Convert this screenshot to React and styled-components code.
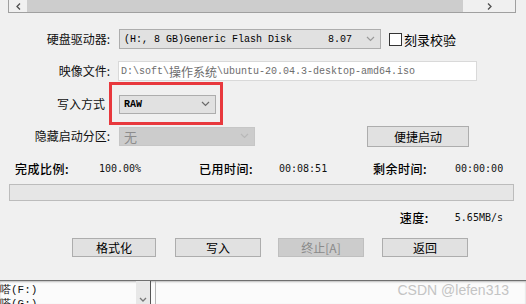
import React from "react";
import styled, { createGlobalStyle } from "styled-components";

const GlobalStyle = createGlobalStyle`
  html, body {
    margin: 0;
    padding: 0;
    background: #f0f0f0;
  }
  body {
    width: 526px;
    height: 304px;
    overflow: hidden;
    font-family: "Noto Sans CJK SC", "Noto Sans", sans-serif;
    font-size: 12px;
    color: #000;
  }
`

const Window = styled.div`
  width: 526px;
  height: 304px;
  display: flex;
  flex-direction: column;
  position: relative;
`

const ScrollStrip = styled.div`
  margin: 0 10px 0 8px;
  height: 12px;
  border: 1px solid #a0a0a0;
  border-top: none;
  display: flex;
  align-items: stretch;
  background: #f0f0f0;
`

const Arrow = styled.div`
  width: ${p => p.w}px;
  display: flex;
  align-items: center;
  justify-content: center;
  color: #606060;
`

const Thumb = styled.div`
  flex: 1;
  background: #cdcdcd;
`

const Form = styled.div`
  display: flex;
  flex-direction: column;
  gap: 12px;
  margin-top: 16px;
`

const Row = styled.div`
  display: flex;
  align-items: center;
  height: 20px;
  margin-top: ${p => p.mt || 0}px;
`

const Label = styled.div`
  width: ${p => p.w || 110}px;
  padding-left: ${p => p.pl || 0}px;
  box-sizing: border-box;
  text-align: ${p => p.left ? "left" : "right"};
  margin-right: ${p => p.mr || 9}px;
  white-space: nowrap;
  line-height: 20px;
  color: #111;
`

const Combo = styled.div`
  position: relative;
  width: ${p => p.w}px;
  height: ${p => p.h || 19}px;
  box-sizing: border-box;
  border: 1px solid ${p => p.disabled ? "#c6c6c6" : "#adadad"};
  background: ${p => p.disabled ? "#cccccc" : "#e1e1e1"};
  display: flex;
  align-items: center;
  padding-left: 4px;
  font-family: "Liberation Mono", monospace;
  font-size: 10px;
  color: ${p => p.disabled ? "#8c8c8c" : "#000"};
  white-space: pre;
`

const ComboText = styled.span`
  flex: 1;
  font-family: ${p => p.cjk ? '"Noto Sans CJK SC", sans-serif' : '"Liberation Mono", monospace'};
  font-size: ${p => p.cjk ? 13 : 10}px;
  font-weight: ${p => p.bold ? 700 : 400};
`

const Chevron = styled.svg`
  width: 9px;
  height: 6px;
  margin-right: 5px;
  flex: none;
`

const Highlight = styled.div`
  position: absolute;
  left: -11px;
  top: -14px;
  right: -8px;
  bottom: -12px;
  border: 3px solid #e8383d;
  pointer-events: none;
`

const CheckBox = styled.div`
  width: 13px;
  height: 13px;
  box-sizing: border-box;
  border: 1px solid #333;
  background: #fff;
  margin-left: 8px;
  margin-right: 2px;
`

const CheckLabel = styled.span`
  font-size: 13px;
`

const PathInput = styled.div`
  width: 359px;
  height: 20px;
  box-sizing: border-box;
  border: 1px solid #d9d9d9;
  background: #fff;
  display: flex;
  align-items: center;
  padding-left: 2px;
  font-family: "Liberation Mono", monospace;
  font-size: 10px;
  color: #6d6d6d;
  white-space: pre;
  margin-left: -1px;
`

const Cjk = styled.span`
  font-family: "Noto Sans CJK SC", sans-serif;
  font-size: 12px;
`

const Button = styled.div`
  width: ${p => p.w}px;
  height: ${p => p.h || 19}px;
  box-sizing: border-box;
  border: 1px solid ${p => p.disabled ? "#bfbfbf" : "#adadad"};
  background: ${p => p.disabled ? "#cccccc" : "#e1e1e1"};
  color: ${p => p.disabled ? "#8a8a8a" : "#000"};
  display: flex;
  align-items: center;
  justify-content: center;
  margin-left: ${p => p.ml || 0}px;
  font-size: 12px;
`

const Stats = styled.div`
  display: grid;
  grid-template-columns: 84px 100px 80px 94px 82px auto;
  padding-left: 15px;
  margin-top: 14px;
  height: 16px;
  align-items: center;
`

const StatLabel = styled.span`
  font-weight: 500;
  color: #000;
  font-size: 12px;
  letter-spacing: 0.5px;
`

const StatValue = styled.span`
  font-family: "DejaVu Sans Mono", monospace;
  font-size: 10px;
  color: #111;
`

const Progress = styled.div`
  margin: 8px 12px 0 9px;
  height: 17px;
  box-sizing: border-box;
  border: 1px solid #bcbcbc;
  background: #e6e6e6;
`

const SpeedRow = styled.div`
  display: flex;
  justify-content: flex-end;
  align-items: center;
  padding-right: 23px;
  margin-top: 8px;
  height: 16px;
  gap: 26px;
`

const Buttons = styled.div`
  display: flex;
  padding-left: 72px;
  margin-top: 13px;
`

const Bottom = styled.div`
  position: absolute;
  left: 0;
  right: 0;
  top: 280px;
  bottom: 0;
  background: #fbfbfb;
  border-top: 1px solid #6f6f6f;
  box-shadow: inset 0 1px 2px rgba(0, 0, 0, 0.25);
  display: flex;
`

const DriveList = styled.div`
  width: 136px;
  font-family: "Liberation Mono", monospace;
  font-size: 11px;
  line-height: 14px;
  padding-top: 2px;
  white-space: pre;
  color: #111;
`

const ListScroll = styled.div`
  width: 15px;
  background: #e8e8e8;
  display: flex;
  align-items: flex-end;
  justify-content: center;
  padding-bottom: 2px;
  box-sizing: border-box;
  border-right: 1px solid #555;
`

const Splitter = styled.div`
  width: 4px;
  border-right: 1px solid #b5b5b5;
`

const Watermark = styled.div`
  position: absolute;
  right: 17px;
  top: 1px;
  font-family: "Liberation Sans", Arial, sans-serif;
  font-size: 14px;
  color: #c4c4c4;
`

const Down = ({ color = "#6a6a6a" }) => (
  <Chevron viewBox="0 0 9 6">
    <path d="M1 1 L4.5 4.5 L8 1" fill="none" stroke={color} strokeWidth="1.2" />
  </Chevron>
)

export default function App() {
  return (
    <Window>
      <GlobalStyle />
      <ScrollStrip>
        <Arrow w={18}>
          <svg width="5" height="7" viewBox="0 0 5 7"><path d="M4 0.5 L1 3.5 L4 6.5" fill="none" stroke="#505050" strokeWidth="1.3" /></svg>
        </Arrow>
        <Thumb />
        <Arrow w={52}>
          <svg width="5" height="7" viewBox="0 0 5 7"><path d="M1 0.5 L4 3.5 L1 6.5" fill="none" stroke="#505050" strokeWidth="1.3" /></svg>
        </Arrow>
      </ScrollStrip>

      <Form>
        <Row>
          <Label>硬盘驱动器:</Label>
          <Combo w={262} h={20}>
            <ComboText>(H:, 8 GB)Generic Flash Disk      8.07</ComboText>
            <Down color="#9a9a9a" />
          </Combo>
          <CheckBox />
          <CheckLabel>刻录校验</CheckLabel>
        </Row>
        <Row>
          <Label>映像文件:</Label>
          <PathInput>D:\soft\<Cjk>操作系统</Cjk>\ubuntu-20.04.3-desktop-amd64.iso</PathInput>
        </Row>
        <Row mt={1}>
          <Label w={104} pl={57} left mr={15}>写入方式</Label>
          <Combo w={97}>
            <ComboText bold>RAW</ComboText>
            <Down />
            <Highlight />
          </Combo>
        </Row>
        <Row>
          <Label>隐藏启动分区:</Label>
          <Combo w={136} disabled>
            <ComboText cjk>无</ComboText>
            <Down color="#b8b8b8" />
          </Combo>
          <Button w={102} h={21} ml={112}>便捷启动</Button>
        </Row>
      </Form>

      <Stats>
        <StatLabel>完成比例:</StatLabel>
        <StatValue>100.00%</StatValue>
        <StatLabel>已用时间:</StatLabel>
        <StatValue>00:08:51</StatValue>
        <StatLabel>剩余时间:</StatLabel>
        <StatValue>00:00:00</StatValue>
      </Stats>

      <Progress />

      <SpeedRow>
        <StatLabel>速度:</StatLabel>
        <StatValue>5.65MB/s</StatValue>
      </SpeedRow>

      <Buttons>
        <Button w={84}>格式化</Button>
        <Button w={86} ml={19}>写入</Button>
        <Button w={86} ml={17} disabled>终止[A]</Button>
        <Button w={86} ml={18}>返回</Button>
      </Buttons>

      <Bottom>
        <DriveList>{"嗒(F:)\n嗒(G:)"}</DriveList>
        <ListScroll>
          <svg width="8" height="5" viewBox="0 0 8 5"><path d="M1 1 L4 4 L7 1" fill="none" stroke="#777" strokeWidth="1.3" /></svg>
        </ListScroll>
        <Splitter />
        <Watermark>CSDN @lefen313</Watermark>
      </Bottom>
    </Window>
  );
}
